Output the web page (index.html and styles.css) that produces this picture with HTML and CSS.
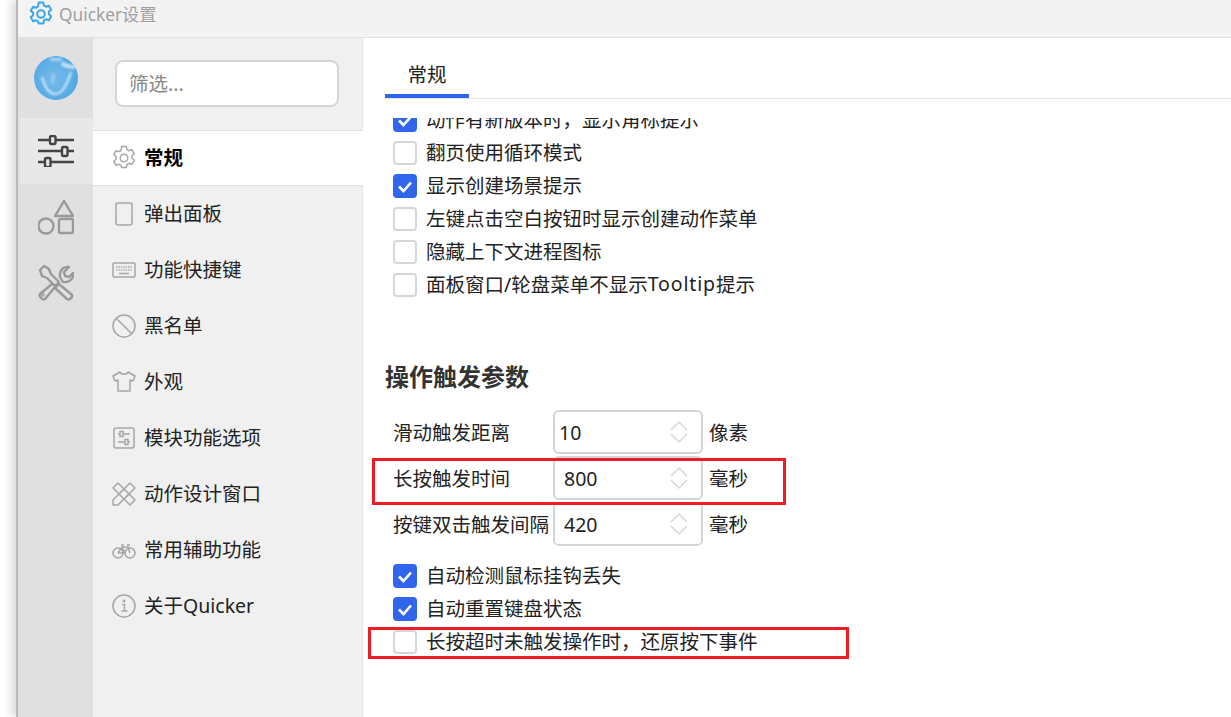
FILE: index.html
```html
<!DOCTYPE html>
<html lang="zh">
<head>
<meta charset="utf-8">
<title>Quicker设置</title>
<link rel="stylesheet" href="styles.css">
</head>
<body>
<svg class="defs" width="0" height="0">
  <defs>
    <g id="gear">
      <path d="M9.700 1.500h4.600l.7 3.100 1.900 1.100 3-1 2.300 4-2.300 2.100v2.400l2.300 2.100-2.300 4-3-1-1.900 1.100-.7 3.100H9.700L9 20.400l-1.900-1.100-3 1-2.300-4L4.100 14.200v-2.400L1.800 9.700l2.300-4 3 1L9 5.600z" stroke-linejoin="round"/>
      <circle cx="12" cy="13" r="3.800"/>
    </g>
    <filter id="soft" x="-20%" y="-20%" width="140%" height="140%"><feGaussianBlur stdDeviation="1"/></filter>
  </defs>
</svg>
<div class="window">
  <header class="titlebar">
    <svg class="title-icon" viewBox="0 1 24 24"><use href="#gear"/></svg>
    <span class="title-text">Quicker设置</span>
  </header>
  <div class="content">
    <aside class="rail">
      <div class="avatar-cell">
        <svg class="avatar" viewBox="0 0 44 44">
          <defs>
            <radialGradient id="av" cx="45%" cy="50%" r="60%"><stop offset="0" stop-color="#78bcea"/><stop offset="1" stop-color="#4ea6e3"/></radialGradient>
            <clipPath id="avc"><circle cx="22" cy="22" r="22"/></clipPath>
          </defs>
          <circle cx="22" cy="22" r="22" fill="url(#av)"/>
          <g clip-path="url(#avc)" fill="none" stroke="#fff" filter="url(#soft)">
            <path d="M8 21c3 11 7 16 12 17 7 1 13-9 17-22" stroke-width="2.400" opacity=".65"/>
            <path d="M28 7c3 3 8 4 13 4" stroke-width="4" opacity=".65"/>
            <path d="M16 3c4 1 8 1 12 0" stroke-width="3" opacity=".5"/>
            <path d="M19 18c1 4-2 7 0 10" stroke-width="1.800" opacity=".4"/>
          </g>
        </svg>
      </div>
      <div class="rail-item rail-item-active">
        <svg class="rail-icon" viewBox="0 0 36 32" fill="none" stroke="#444" stroke-width="2.400">
          <path d="M0 5h36M0 16h36M0 27h36"/>
          <rect x="12" y="1" width="5.500" height="8" rx="1.500" fill="#e8e8e8"/>
          <rect x="24" y="12" width="5.500" height="9" rx="1.500" fill="#e8e8e8"/>
          <rect x="7" y="23" width="5.500" height="9" rx="1.500" fill="#e8e8e8"/>
        </svg>
      </div>
      <div class="rail-item">
        <svg class="rail-icon rail-icon-tall" viewBox="0 0 36 36" fill="none" stroke="#999" stroke-width="2.400">
          <path d="M26 2l9 15H17z" stroke-linejoin="round"/>
          <circle cx="8" cy="27" r="7.500"/>
          <rect x="21" y="20" width="14" height="14" rx="1.500"/>
        </svg>
      </div>
      <div class="rail-item">
        <svg class="rail-icon rail-icon-tall" viewBox="0 0 36 36" fill="none" stroke="#999" stroke-width="2.400" stroke-linejoin="round">
          <path d="M2 5l4-4 5 3 2 5 8 8-4 4-8-8-5-2z"/>
          <path d="M22 12c-1-6 3-11 9-10l-5 5 1 4 4 1 4-4c1 6-4 10-10 9z"/>
          <path d="M14 19L2 29c-2 2 3 7 5 5l10-12"/>
          <path d="M21 19l13 11c1 2-3 6-5 4L17 23z"/>
          <circle cx="5" cy="30" r=".6"/>
        </svg>
      </div>
    </aside>
    <nav class="nav">
      <div class="search-cell"><div class="search">筛选...</div></div>
      <div class="nav-item nav-item-active">
        <svg class="nav-icon" viewBox="0 1 24 24"><use href="#gear"/></svg><span>常规</span>
      </div>
      <div class="nav-item">
        <svg class="nav-icon" viewBox="0 0 24 24"><rect x="4" y="1" width="16" height="22" rx="2"/></svg><span>弹出面板</span>
      </div>
      <div class="nav-item">
        <svg class="nav-icon" viewBox="0 0 24 24"><rect x="1" y="5" width="22" height="14" rx="1"/><path d="M4 9h16M4 12h16" stroke-dasharray="1.400 1"/><path d="M7 15.500h10"/></svg><span>功能快捷键</span>
      </div>
      <div class="nav-item">
        <svg class="nav-icon" viewBox="0 0 24 24"><circle cx="12" cy="12" r="11"/><path d="M4.500 4.500l15 15"/></svg><span>黑名单</span>
      </div>
      <div class="nav-item">
        <svg class="nav-icon" viewBox="0 0 24 24"><path d="M8 2L1 6l2 5 3-1v11h12V10l3 1 2-5-7-4c-1 3-7 3-8 0z" stroke-linejoin="round"/></svg><span>外观</span>
      </div>
      <div class="nav-item">
        <svg class="nav-icon" viewBox="0 0 24 24"><rect x="2" y="2" width="20" height="20" rx="2"/><path d="M6 8h12M6 16h12"/><rect x="8" y="5.500" width="3" height="5" fill="#f0f0f0"/><rect x="13" y="13.500" width="3" height="5" fill="#f0f0f0"/></svg><span>模块功能选项</span>
      </div>
      <div class="nav-item">
        <svg class="nav-icon" viewBox="0 0 24 24"><path d="M18 1l5 5L6 23H1v-5z" stroke-linejoin="round"/><path d="M6 1L1 6l17 17 5-5z" stroke-linejoin="round"/><path d="M9 10l2-2M14 15l2-2"/></svg><span>动作设计窗口</span>
      </div>
      <div class="nav-item">
        <svg class="nav-icon" viewBox="0 0 24 24"><circle cx="6" cy="15" r="5"/><circle cx="18" cy="15" r="5"/><path d="M6 15l4-6h6l2 6M10 9l3 6H6M9 7h3M15 7h3"/></svg><span>常用辅助功能</span>
      </div>
      <div class="nav-item">
        <svg class="nav-icon" viewBox="0 0 24 24"><circle cx="12" cy="12" r="11"/><path d="M10 10.500h2.500V17M9.500 17h6"/><circle cx="12" cy="7" r=".7"/></svg><span>关于Quicker</span>
      </div>
    </nav>
    <main class="main">
      <div class="tabs"><div class="tab">常规</div></div>
      <div class="scroller">
        <div class="scroll-inner">
          <div class="check-row"><span class="box box-on"><svg viewBox="0 0 24 24"><path d="M6 12.500l4.500 4.500L18 8.500"/></svg></span>动作有新版本时，显示角标提示</div>
          <div class="check-row"><span class="box"></span>翻页使用循环模式</div>
          <div class="check-row"><span class="box box-on"><svg viewBox="0 0 24 24"><path d="M6 12.500l4.500 4.500L18 8.500"/></svg></span>显示创建场景提示</div>
          <div class="check-row"><span class="box"></span>左键点击空白按钮时显示创建动作菜单</div>
          <div class="check-row"><span class="box"></span>隐藏上下文进程图标</div>
          <div class="check-row"><span class="box"></span>面板窗口/轮盘菜单不显示<span class="latin-wide">Tooltip</span>提示</div>
          <h2 class="section-title">操作触发参数</h2>
          <div class="num-row">
            <span class="num-label">滑动触发距离</span>
            <div class="num-input num-input-tight"><span>10</span><svg class="spin" viewBox="0 0 18 30"><path d="M1 13l8-8 8 8M1 17l8 8 8-8"/></svg></div>
            <span class="num-unit">像素</span>
          </div>
          <div class="num-row">
            <span class="num-label">长按触发时间</span>
            <div class="num-input"><span>800</span><svg class="spin" viewBox="0 0 18 30"><path d="M1 13l8-8 8 8M1 17l8 8 8-8"/></svg></div>
            <span class="num-unit">毫秒</span>
          </div>
          <div class="num-row">
            <span class="num-label">按键双击触发间隔</span>
            <div class="num-input"><span>420</span><svg class="spin" viewBox="0 0 18 30"><path d="M1 13l8-8 8 8M1 17l8 8 8-8"/></svg></div>
            <span class="num-unit">毫秒</span>
          </div>
          <div class="check-group">
            <div class="check-row"><span class="box box-on"><svg viewBox="0 0 24 24"><path d="M6 12.500l4.500 4.500L18 8.500"/></svg></span>自动检测鼠标挂钩丢失</div>
            <div class="check-row"><span class="box box-on"><svg viewBox="0 0 24 24"><path d="M6 12.500l4.500 4.500L18 8.500"/></svg></span>自动重置键盘状态</div>
            <div class="check-row"><span class="box"></span>长按超时未触发操作时，还原按下事件</div>
          </div>
        </div>
      </div>
    </main>
  </div>
</div>
<div class="mark mark-a"></div>
<div class="mark mark-b"></div>
</body>
</html>
```

FILE: styles.css
```css
* { box-sizing: border-box; }
html, body { margin: 0; height: 100%; overflow: hidden; background: #fff; }
body {
  font-family: "Noto Sans", "Noto Sans CJK SC", sans-serif;
  font-size: 19.5px;
  color: #222;
  padding-left: 16px;
  position: relative;
}
.defs { position: absolute; }
.window {
  height: 717px;
  display: flex;
  flex-direction: column;
  border-left: 2px solid #b9b9b9;
  box-shadow: -5px 0 8px rgba(0, 0, 0, .14);
  background: #fff;
}
.titlebar {
  height: 38px;
  flex: none;
  background: #f3f3f3;
  border-bottom: 1px solid #e2e2e2;
  display: flex;
  align-items: flex-start;
  padding-left: 11px;
}
.title-icon { width: 24px; height: 24px; margin-top: 2px; fill: none; stroke: #3ba6ec; stroke-width: 2; overflow: visible; }
.title-text { margin-left: 6px; font-size: 17.300px; line-height: 29px; color: #a0a0a0; }
.content { flex: 1; display: flex; min-height: 0; }
.rail { width: 75px; flex: none; background: #e0e0e0; }
.avatar-cell { height: 80px; display: flex; justify-content: center; padding-top: 18px; padding-left: 1px; }
.avatar { width: 44px; height: 44px; }
.rail-item { height: 66px; display: flex; align-items: center; justify-content: center; }
.rail-item-active { background: #e8e8e8; margin-left: 2px; padding-right: 2px; }
.rail-icon { width: 36px; height: 32px; }
.rail-icon-tall { height: 36px; }
.nav {
  width: 270px;
  flex: none;
  background: #f0f0f0;
  border-right: 1px solid #e4e4e4;
}
.search-cell { height: 93px; padding: 22px 23px 0 22px; border-bottom: 1px solid #e2e2e2; }
.search {
  height: 47px;
  background: #fff;
  border: 2px solid #d2d5da;
  border-radius: 8px;
  padding-left: 12px;
  line-height: 43px;
  color: #888;
}
.nav-item { height: 56px; display: flex; align-items: center; padding-left: 19px; }
.nav-item span { padding-bottom: 4px; }
.nav-item-active {
  height: 55px;
  background: #fff;
  font-weight: 700;
  color: #000;
  border-bottom: 1px solid #e2e2e2;
  margin-right: -1px;
}
.nav-icon { width: 24px; height: 24px; margin-right: 8px; fill: none; stroke: #a6a6a6; stroke-width: 1.500; flex: none; overflow: visible; }
.main { flex: 1; min-width: 0; display: flex; flex-direction: column; padding-left: 22px; }
.tabs { height: 61px; flex: none; border-bottom: 1px solid #e2e2e2; padding-top: 21px; }
.tab { width: 84px; height: 39px; text-align: center; line-height: 32px; border-bottom: 4px solid #3166ec; color: #222; }
.scroller { height: 0; flex: 1; overflow: hidden; padding-left: 8px; margin-top: 19px; }
.scroll-inner { margin-top: -15px; }
.check-row { height: 33px; display: flex; align-items: center; white-space: pre; padding-bottom: 3px; }
.latin-wide { letter-spacing: .85px; }
.box {
  width: 24px;
  height: 24px;
  margin-top: 3px;
  margin-right: 9px;
  flex: none;
  border: 2px solid #d4d7dc;
  border-radius: 4px;
  background: #fff;
}
.box-on { background: #3166ec; border-color: #3166ec; }
.box svg { display: block; width: 24px; height: 24px; margin: -2px; fill: none; stroke: #fff; stroke-width: 2.600; }
.section-title { margin: 60px 0 0 -8px; height: 32px; font-size: 24px; line-height: 32px; font-weight: 700; color: #333; }
.num-row { height: 46px; display: flex; align-items: center; }
.section-title + .num-row { margin-top: 15px; }
.num-label { width: 160px; white-space: nowrap; flex: none; }
.num-input {
  width: 150px;
  height: 44px;
  margin-top: 2px;
  border: 2px solid #d2d5da;
  border-radius: 6px;
  display: flex;
  align-items: center;
  justify-content: space-between;
  padding: 0 13px 0 9px;
  flex: none;
}
.num-input-tight { padding-left: 4px; }
.spin { width: 18px; height: 30px; fill: none; stroke: #d4d7dc; stroke-width: 1.500; }
.num-unit { margin-left: 6px; }
.check-group { margin-top: 13px; }
.mark { position: absolute; border: 3px solid #ee1c25; pointer-events: none; }
.mark-a { left: 372px; top: 458px; width: 414px; height: 47px; }
.mark-b { left: 368px; top: 627px; width: 481px; height: 32px; }
```
